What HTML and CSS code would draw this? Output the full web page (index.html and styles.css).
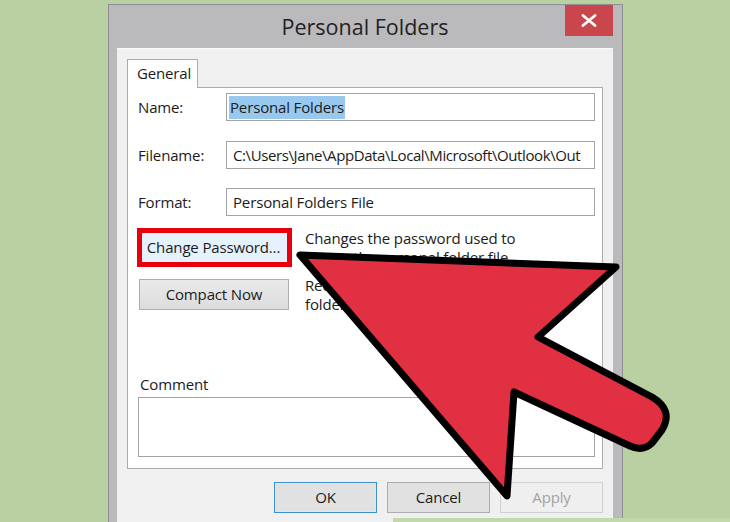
FILE: index.html
```html
<!DOCTYPE html>
<html>
<head>
<meta charset="utf-8">
<link rel="stylesheet" href="styles.css">
</head>
<body>
<div class="window">
  <div class="titlebar">
    <span class="spacer"></span>
    <div class="title">Personal Folders</div>
    <div class="close"><svg width="16" height="13" viewBox="0 0 16 13"><path d="M2 1.5 L14 11.5 M14 1.5 L2 11.5" stroke="#fff" stroke-width="2.8" stroke-linecap="round"/></svg></div>
  </div>
  <div class="client">
    <div class="tabs"><div class="tab">General</div></div>
    <div class="panel">
      <div class="row r1"><span class="label">Name:</span><div class="field"><span class="sel">Personal Folders</span></div></div>
      <div class="row r2"><span class="label">Filename:</span><div class="field path">C:\Users\Jane\AppData\Local\Microsoft\Outlook\Out</div></div>
      <div class="row r3"><span class="label">Format:</span><div class="field">Personal Folders File</div></div>
      <div class="action a1"><div class="btn pw">Change Password...</div><p class="desc">Changes the password used to<br>access the personal folder file.</p></div>
      <div class="action a2"><div class="btn compact">Compact Now</div><p class="desc">Reduces the size of your personal<br>folder file.</p></div>
      <div class="comment-label">Comment</div>
      <div class="comment"></div>
    </div>
    <div class="footer">
      <div class="btn ok">OK</div>
      <div class="btn">Cancel</div>
      <div class="btn disabled">Apply</div>
    </div>
  </div>
</div>
<svg class="arrow" width="730" height="522" viewBox="0 0 730 522">
  <path d="M300 255 L616 267 L538 337 L652 397 Q674 410 662 430 L652 443 Q643 452 630 446 L514 392 L507 496 Z" fill="#e03041" stroke="#000" stroke-width="7" stroke-linejoin="round"/>
</svg>
<div class="strip"></div>
</body>
</html>
```
FILE: styles.css
```css
html, body {
  margin: 0;
  padding: 0;
  height: 522px;
  overflow: hidden;
}
body {
  background: #b8d0a2;
  font-family: "Open Sans", "Noto Sans", sans-serif;
  font-size: 15px;
  letter-spacing: -0.15px;
  color: #1b1b1b;
  padding: 4px 0 0 108px;
  box-sizing: border-box;
  position: relative;
}
.window {
  width: 515px;
  height: 540px;
  background: #bababd;
  box-sizing: border-box;
  border: 1px solid #8f8f93;
  border-bottom: none;
  display: flex;
  flex-direction: column;
}
.titlebar {
  height: 43px;
  display: grid;
  grid-template-columns: 1fr auto 1fr;
  padding: 0 9px 0 8px;
  align-items: start;
}
.title {
  font-size: 21.5px;
  letter-spacing: 0;
  line-height: 30px;
  margin-top: 7px;
  color: #222;
}
.close {
  justify-self: end;
  width: 48px;
  height: 31px;
  background: #c9464c;
  display: flex;
  align-items: center;
  justify-content: center;
  padding-bottom: 1px;
  box-sizing: border-box;
}
.client {
  margin: 0 9px 0 8px;
  background: #f0f0f0;
  flex: 1;
  padding: 10px 10px 0 10px;
  border-top: 1px solid #fafafa;
}
.tabs {
  display: flex;
  height: 28px;
}
.tab {
  width: 71px;
  box-sizing: border-box;
  border: 1px solid #acacac;
  border-bottom: none;
  background: #fff;
  padding: 1px 0 0 9px;
  line-height: 24px;
  position: relative;
  z-index: 1;
  height: 29px;
}
.panel {
  background: #fff;
  border: 1px solid #acacac;
  height: 382px;
  box-sizing: border-box;
  padding: 5px 7px 0 10px;
  display: flex;
  flex-direction: column;
}
.row {
  display: flex;
  align-items: center;
  height: 28px;
}
.r2 { margin-top: 20px; }
.r3 { margin-top: 19px; }
.label {
  width: 88px;
  flex: none;
}
.field {
  flex: 1;
  height: 28px;
  box-sizing: border-box;
  border: 1px solid #a3a3a3;
  padding: 0 0 0 6px;
  line-height: 26px;
  white-space: nowrap;
  overflow: hidden;
}
.path {
  letter-spacing: -0.4px;
}
.sel {
  background: #99c8ee;
  margin-left: -4px;
  padding: 1px 1px 2px 1px;
}
.action {
  display: grid;
  grid-template-columns: 155px 1fr;
  column-gap: 13px;
  align-items: start;
}
.a1 { margin: 12px 0 0 -1px; height: 39px; }
.a2 { margin: 12px 0 0 -1px; height: 31px; }
.btn {
  box-sizing: border-box;
  height: 31px;
  border: 1px solid #adadad;
  background: #e1e1e1;
  text-align: center;
  line-height: 29px;
  color: #1b1b1b;
}
.pw {
  height: 39px;
  border: 5px solid #e8000c;
  background: #e5f1fb;
  line-height: 29px;
  padding-right: 2px;
}
.compact {
  width: 150px;
  margin-left: 2px;
  background: linear-gradient(#eaeaea, #dcdcdc);
}
.desc {
  margin: 0;
  line-height: 19px;
  white-space: nowrap;
}
.a1 .desc { margin-top: 1px; }
.a2 .desc { margin-top: -3px; }
.comment-label {
  margin-top: 64px;
  line-height: 20px;
  padding-left: 2px;
}
.comment {
  margin-top: 3px;
  height: 60px;
  box-sizing: border-box;
  border: 1px solid #a3a3a3;
}
.footer {
  display: flex;
  justify-content: flex-end;
  padding-top: 13px;
  gap: 10px;
}
.footer .btn {
  width: 103px;
}
.ok {
  border-color: #3d8fd0;
  box-shadow: inset 0 0 0 1px #d8e9f6;
}
.disabled {
  background: #efefef;
  border-color: #d0d0d0;
  color: #a3a3a3;
}
.arrow {
  position: absolute;
  left: 0;
  top: 0;
  pointer-events: none;
}
.strip {
  position: absolute;
  left: 393px;
  right: 0;
  bottom: 0;
  height: 4px;
  background: #c3d9ad;
}
```
